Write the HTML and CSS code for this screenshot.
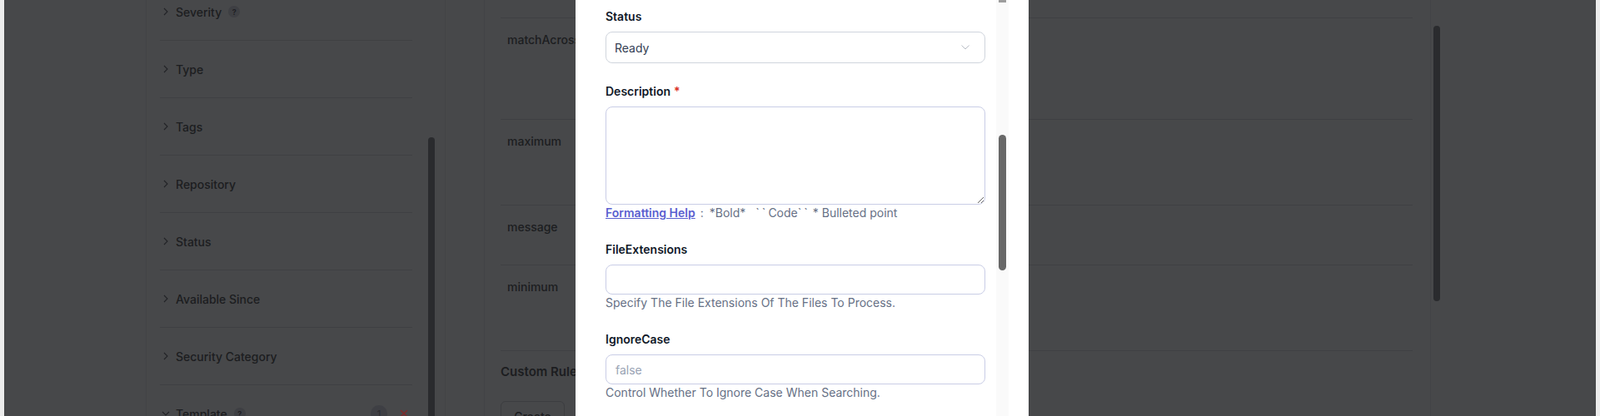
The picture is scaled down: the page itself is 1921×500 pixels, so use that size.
FILE: index.html
```html
<!DOCTYPE html>
<html lang="en">
<head>
<meta charset="utf-8">
<title>Rule editor</title>
<link rel="stylesheet" href="styles.css">
</head>
<body>
<div class="edge"></div>
<div class="page">
  <aside class="sidebar">
    <div class="filters">
      <div class="filter"><svg class="chev" viewBox="0 0 12 12"><path d="M4 2 L8 6 L4 10"/></svg><span class="flabel">Severity</span><span class="q">?</span></div>
      <div class="filter"><svg class="chev" viewBox="0 0 12 12"><path d="M4 2 L8 6 L4 10"/></svg><span class="flabel">Type</span></div>
      <div class="filter"><svg class="chev" viewBox="0 0 12 12"><path d="M4 2 L8 6 L4 10"/></svg><span class="flabel">Tags</span></div>
      <div class="filter"><svg class="chev" viewBox="0 0 12 12"><path d="M4 2 L8 6 L4 10"/></svg><span class="flabel">Repository</span></div>
      <div class="filter"><svg class="chev" viewBox="0 0 12 12"><path d="M4 2 L8 6 L4 10"/></svg><span class="flabel">Status</span></div>
      <div class="filter"><svg class="chev" viewBox="0 0 12 12"><path d="M4 2 L8 6 L4 10"/></svg><span class="flabel">Available Since</span></div>
      <div class="filter"><svg class="chev" viewBox="0 0 12 12"><path d="M4 2 L8 6 L4 10"/></svg><span class="flabel">Security Category</span></div>
      <div class="filter"><svg class="chev" viewBox="0 0 12 12"><path d="M2 4 L6 8 L10 4"/></svg><span class="flabel">Template</span><span class="q">?</span><span class="count">1</span><svg class="clear" viewBox="0 0 10 10"><path d="M1 1 L9 9 M9 1 L1 9"/></svg></div>
    </div>
    <div class="side-track"><div class="side-thumb"></div></div>
  </aside>
  <main class="main">
    <div class="rows">
      <div class="row row-prev"></div>
      <div class="row row-a"><span class="param">matchAcrossLines</span></div>
      <div class="row row-b"><span class="param">maximum</span></div>
      <div class="row row-c"><span class="param">message</span></div>
      <div class="row row-b"><span class="param">minimum</span></div>
    </div>
    <h3 class="section-title">Custom Rules</h3>
    <button class="btn" type="button">Create</button>
  </main>
  <div class="page-track"><div class="page-thumb"></div></div>
</div>
<div class="edge"></div>

<div class="modal">
  <div class="modal-body">
    <div class="field">
      <label class="label">Status</label>
      <div class="select"><span>Ready</span><svg class="select-chev" viewBox="0 0 10 6"><path d="M0.5 0.5 L5 5 L9.5 0.5"/></svg></div>
    </div>
    <div class="field">
      <label class="label">Description<span class="req">*</span></label>
      <textarea class="textarea"></textarea>
      <div class="help fmt"><a class="fmt-link" href="#">Formatting Help</a><span class="fmt-colon">:</span><span class="fmt-item">*Bold*</span><span class="fmt-item fmt-code"><span class="tick">``</span>Code<span class="tick">``</span></span><span class="fmt-item fmt-list">* Bulleted point</span></div>
    </div>
    <div class="field">
      <label class="label">FileExtensions</label>
      <input class="input" type="text">
      <div class="help">Specify The File Extensions Of The Files To Process.</div>
    </div>
    <div class="field">
      <label class="label">IgnoreCase</label>
      <input class="input" type="text" placeholder="false">
      <div class="help">Control Whether To Ignore Case When Searching.</div>
    </div>
  </div>
  <div class="modal-track"><div class="modal-arrow"></div><div class="modal-thumb"></div></div>
</div>
</body>
</html>
```
FILE: styles.css
```css
* { box-sizing: border-box; }
html, body { margin: 0; padding: 0; }
body {
  width: 1921px;
  height: 500px;
  overflow: hidden;
  display: flex;
  background: #47484a;
  font-family: Inter, "Noto Sans", sans-serif;
  color: #1c1d20;
}
.edge { width: 5px; flex: none; background: #ececec; }
.edge:last-of-type { width: 4px; }
.page {
  flex: 1;
  display: flex;
  padding-left: 170px;
  height: 500px;
  overflow: hidden;
}
/* sidebar */
.sidebar {
  width: 360px;
  flex: none;
  display: flex;
  border-left: 1px solid #424346;
  border-right: 1px solid #424346;
  padding-left: 16px;
}
.filters { width: 303px; margin-top: -20px; }
.filter {
  height: 69px;
  border-bottom: 1px solid #3f4043;
  display: flex;
  align-items: center;
  padding-left: 1px;
  padding-right: 5px;
}
.chev { width: 12px; height: 12px; flex: none; }
.chev path { fill: none; stroke: #222327; stroke-width: 1.1; }
.flabel { margin-left: 6px; font-size: 14px; font-weight: 500; color: #1c1d20; }
.q {
  width: 14px; height: 14px; border-radius: 50%;
  background: #3e3f43; color: #1f2024;
  font-size: 9px; font-weight: 700;
  display: inline-flex; align-items: center; justify-content: center;
  margin-left: 8px;
}
.count {
  margin-left: auto;
  width: 20px; height: 20px; border-radius: 50%;
  background: #3e3f44; color: #2b2c30;
  font-size: 12px;
  display: inline-flex; align-items: center; justify-content: center;
}
.clear { width: 10px; height: 10px; margin-left: 15px; }
.clear path { stroke: #7e2a2b; stroke-width: 1.5; fill: none; }
.side-track { width: 8px; margin-left: 19px; }
.side-thumb { margin-top: 165px; height: 400px; border-radius: 4px; background: #2a2b2e; }

/* main */
.main {
  width: 1137px;
  flex: none;
  margin-left: 46px;
  border-left: 1px solid #424346;
  border-right: 1px solid #424346;
  padding-left: 19px;
  padding-right: 21px;
}
.rows { margin-top: -80px; }
.row { border-bottom: 1px solid #3f4043; padding: 17px 0 0 8px; }
.row-prev { height: 102px; }
.row-a { height: 122px; }
.row-b { height: 103px; }
.row-c { height: 72px; }
.param { font-size: 14px; font-weight: 500; line-height: 18px; color: #1c1d20; display: block; }
.section-title {
  margin: 15px 0 0 0;
  font-size: 15px; font-weight: 600; line-height: 20px; color: #1c1d20;
}
.btn {
  margin-top: 25px;
  height: 36px; width: 77px;
  border: 1px solid #3c3d40; border-radius: 6px;
  background: transparent;
  font-family: Inter, sans-serif; font-size: 14px; font-weight: 500; color: #1c1d20;
  padding: 0;
}
.page-track { width: 8px; margin-left: 3px; }
.page-thumb { margin-top: 31px; height: 331px; border-radius: 4px; background: #2a2b2e; }

/* modal */
.modal {
  position: fixed;
  left: 691px; top: 0;
  width: 544px; height: 500px;
  background: #ffffff;
  display: flex;
  padding-right: 24px;
}
.modal-body { flex: 1; padding: 10px 13px 0 36px; }
.field { margin-bottom: 24px; }
.label {
  display: block;
  font-size: 14px; font-weight: 600; line-height: 20px; color: #101828;
  margin-bottom: 8px;
}
.req { color: #d92d20; margin-left: 4px; }
.select {
  height: 38px;
  border: 1px solid #d0d5dd; border-radius: 8px;
  display: flex; align-items: center; justify-content: space-between;
  padding: 0 18px 0 10px;
  font-size: 14px; color: #344054;
}
.select-chev { width: 10px; height: 6px; }
.select-chev path { fill: none; stroke: #b9bdc6; stroke-width: 1; }
.textarea {
  display: block; width: 100%; height: 118px;
  border: 1px solid #c9cde6; border-radius: 8px;
  resize: vertical; margin: 0;
  font-family: Inter, sans-serif; font-size: 14px;
  padding: 10px 11px;
}
.input {
  display: block; width: 100%; height: 36px;
  border: 1px solid #c9cde6; border-radius: 8px;
  padding: 0 11px; margin: 0;
  font-family: Inter, sans-serif; font-size: 14px; color: #344054;
  outline: none;
}
.input::placeholder { color: #98a2b3; }
.help { font-size: 14px; line-height: 20px; color: #667085; }
.fmt { display: flex; white-space: nowrap; }
.fmt-link { color: #5a5fd0; font-weight: 600; text-decoration: underline; }
.fmt-colon { margin-left: 6px; }
.fmt-item { margin-left: 7px; }
.fmt-code { margin-left: 12px; }
.fmt-list { margin-left: 3px; }
.tick { letter-spacing: 3px; }
.modal-track { width: 15px; flex: none; background: #fafafa; padding-left: 3px; }
.modal-arrow { width: 9px; height: 3px; background: #9d9d9d; }
.modal-thumb { width: 9px; height: 163px; margin-top: 159px; border-radius: 5px; background: #686868; }
```
